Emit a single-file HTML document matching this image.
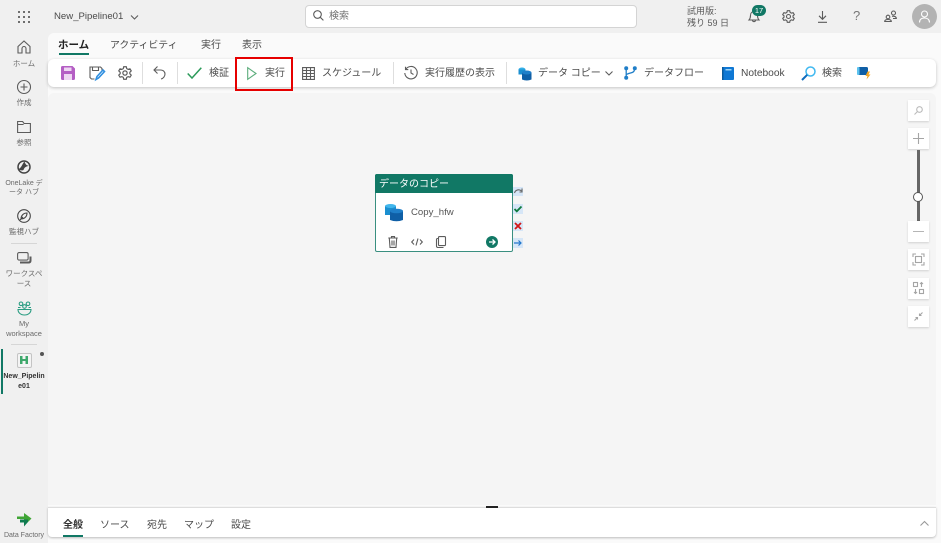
<!DOCTYPE html>
<html lang="ja"><head><meta charset="utf-8"><title>New_Pipeline01</title>
<style>
html,body{margin:0;padding:0}
body{width:941px;height:543px;overflow:hidden;position:relative;background:#f0f0f0;font-family:"Liberation Sans","Noto Sans CJK JP",sans-serif;color:#424242}
.a{position:absolute}
.t{position:absolute;white-space:nowrap;font-size:10px;line-height:14px;color:#4a4a4a}
.s{position:absolute;text-align:center;font-size:7.5px;line-height:10px;color:#6a6a6a;width:48px;left:0}
svg{position:absolute;overflow:visible;fill:none;stroke:#5c5c5c;stroke-width:1.1}
.sep{position:absolute;width:1px;top:62px;height:22px;background:#dedede}
.zb{position:absolute;left:908px;width:21px;height:21px;background:#fff;box-shadow:0 1px 2px rgba(0,0,0,.15)}
</style></head><body>

<!-- panels -->
<div class="a" style="left:48px;top:33px;width:893px;height:510px;background:#fafafa;border-radius:6px 0 0 0"></div>
<div class="a" style="left:48px;top:59px;width:888px;height:28px;background:#fff;border-radius:6px;box-shadow:0 1px 3px rgba(0,0,0,.22)"></div>
<div class="a" style="left:48px;top:93px;width:888px;height:412px;background:#f5f5f5;border-radius:6px 6px 0 0"></div>
<div class="a" style="left:48px;top:507px;width:888px;height:29px;background:#fff;border-top:1px solid #ddd;box-shadow:0 1px 2px rgba(0,0,0,.25);border-radius:0 0 4px 4px"></div>
<div class="a" style="left:486px;top:506px;width:12px;height:2px;background:#222"></div>

<!-- top bar -->
<svg style="left:18px;top:11px" width="12" height="12"><g fill="#444" stroke="none"><circle cx="1" cy="1" r="1"/><circle cx="6" cy="1" r="1"/><circle cx="11" cy="1" r="1"/><circle cx="1" cy="6" r="1"/><circle cx="6" cy="6" r="1"/><circle cx="11" cy="6" r="1"/><circle cx="1" cy="11" r="1"/><circle cx="6" cy="11" r="1"/><circle cx="11" cy="11" r="1"/></g></svg>
<div class="t" style="left:54px;top:10px;font-size:9.6px">New_Pipeline01</div>
<svg style="left:130px;top:15px" width="9" height="5"><path d="M1 .5l3.500 3.500L8 .5"/></svg>
<div class="a" style="left:305px;top:5px;width:330px;height:21px;background:#fff;border:1px solid #d4d4d4;border-radius:4px"></div>
<svg style="left:313px;top:10px" width="11" height="11"><circle cx="4.500" cy="4.500" r="3.800"/><path d="M7.300 7.300l3.100 3.100"/></svg>
<div class="t" style="left:329px;top:10px;color:#707070">検索</div>
<div class="t" style="left:687px;top:5px;font-size:9px;line-height:12px;color:#5a5a5a">試用版:<br>残り 59 日</div>
<svg style="left:748px;top:9px" width="12" height="14"><path d="M1 11h10c-1.300-1.500-1.500-2.500-1.500-4.500C9.500 4 8 2.500 6 2.500S2.500 4 2.500 6.500C2.500 8.500 2.300 9.500 1 11zM4.500 11.500c.3 1.500 2.700 1.500 3 0"/></svg>
<div class="a" style="left:752px;top:5px;width:14px;height:11px;background:#117865;border-radius:6px;color:#fff;font-size:7.500px;line-height:11px;text-align:center">17</div>
<svg style="left:782px;top:10px" width="13" height="13" viewBox="0 0 13 13"><path d="M5.300.7h2.400l.4 1.700 1.300.7 1.700-.5 1.200 2-1.300 1.200v1.400l1.300 1.200-1.200 2-1.700-.5-1.300.7-.4 1.700H5.300l-.4-1.700-1.300-.7-1.700.5-1.200-2 1.300-1.200V5.800L.7 4.600l1.200-2 1.700.5 1.300-.7z"/><circle cx="6.500" cy="6.500" r="2"/></svg>
<svg style="left:817px;top:11px" width="11" height="12"><path d="M5.500 0v8M2 4.800l3.500 3.500L9 4.800M1 11.300h9"/></svg>
<div class="t" style="left:853px;top:9px;font-size:13px;color:#777">?</div>
<svg style="left:884px;top:10px" width="13" height="12"><circle cx="4" cy="7" r="1.800"/><path d="M.7 11.500c0-1.500 1.300-2 3.300-2s3.300.5 3.300 2z"/><circle cx="9.500" cy="3" r="2"/><path d="M8 6.300c2-.3 4.300.2 4.300 2.200H9"/></svg>
<div class="a" style="left:912px;top:4px;width:25px;height:25px;background:#b3b3b3;border-radius:50%"></div>
<svg style="left:918px;top:10px;stroke:#fff" width="13" height="13"><circle cx="6.500" cy="4" r="3"/><path d="M1.500 12.500c0-3 2-4.500 5-4.500s5 1.500 5 4.500"/></svg>

<!-- ribbon tabs -->
<div class="t" style="left:58px;top:38px;font-weight:bold;color:#222;font-size:10.500px">ホーム</div>
<div class="a" style="left:59px;top:53px;width:30px;height:2px;background:#117865"></div>
<div class="t" style="left:110px;top:39px;font-size:9.900px">アクティビティ</div>
<div class="t" style="left:201px;top:39px">実行</div>
<div class="t" style="left:242px;top:39px">表示</div>

<!-- toolbar -->
<svg style="left:61px;top:66px;stroke:none" width="14" height="14"><path fill="#b45ec4" d="M0 1.500Q0 0 1.500 0h10L14 2.500v10q0 1.500-1.500 1.500h-11Q0 14 0 12.500z"/><rect x="3" y="1.500" width="7.500" height="3.500" fill="#eed6f2"/><rect x="3" y="8" width="8" height="6" fill="#eed6f2"/></svg>
<svg style="left:89px;top:66px" width="16" height="15"><path d="M5.500 13H2.500L1 11.500V1h10.500L13 2.500v2M3.500 1.500V4.500h6V1.500"/><path d="M7 13.500l1-3 6-6.500 1.500 1.500-6 6.500z" style="stroke:#2f8fe0;stroke-width:1.600"/></svg>
<svg style="left:118px;top:66px" width="14" height="14" viewBox="0 0 13 13"><path d="M5.300.7h2.400l.4 1.700 1.300.7 1.700-.5 1.200 2-1.300 1.200v1.400l1.300 1.200-1.200 2-1.700-.5-1.300.7-.4 1.700H5.300l-.4-1.700-1.300-.7-1.700.5-1.200-2 1.300-1.200V5.800L.7 4.600l1.200-2 1.700.5 1.300-.7z"/><circle cx="6.500" cy="6.500" r="2"/></svg>
<div class="sep" style="left:142px"></div>
<svg style="left:153px;top:66px" width="13" height="14"><path d="M4.500 .5L1 4l3.500 3.500M1 4h6.500c3 0 4.500 2 4.500 4s-1.500 4.500-4 5"/></svg>
<div class="sep" style="left:177px"></div>
<svg style="left:187px;top:67px;stroke:#2c9a5a;stroke-width:1.500" width="15" height="12"><path d="M.7 6.500L5 11 14.300.7"/></svg>
<div class="t" style="left:209px;top:67px">検証</div>
<div class="a" style="left:235px;top:57px;width:54px;height:30px;border:2px solid #e60000"></div>
<svg style="left:247px;top:67px;stroke:#5cad7c" width="10" height="13"><path d="M.7.700L9 6.500.7 12.300z"/></svg>
<div class="t" style="left:265px;top:67px">実行</div>
<svg style="left:302px;top:66px" width="13" height="14"><path d="M.6 1.600h11.800v11.800H.6zM.6 4.500h11.800M.6 7.500h11.800M.6 10.500h11.800M4.500 1.600v11.800M8.500 1.600v11.800"/></svg>
<div class="t" style="left:322px;top:67px">スケジュール</div>
<div class="sep" style="left:393px"></div>
<svg style="left:404px;top:66px" width="14" height="14"><path d="M1.800 3.300A6.200 6.200 0 1 1 .8 7M1.500.8v2.800h2.800M7 3.500V7l2.500 1.500"/></svg>
<div class="t" style="left:425px;top:67px">実行履歴の表示</div>
<div class="sep" style="left:506px"></div>
<svg style="left:518px;top:67px;stroke:none" width="14" height="14"><ellipse cx="4" cy="2.500" rx="3.500" ry="2" fill="#34b0e8"/><path d="M.5 2.500h7v5h-7z" fill="#1b8fd0"/><path d="M4 5.500h9.500v7q-4.700 2-9.500 0z" fill="#0f5fa6"/><ellipse cx="8.700" cy="5.500" rx="4.800" ry="2" fill="#1f7fc9"/></svg>
<div class="t" style="left:538px;top:67px">データ コピー</div>
<svg style="left:605px;top:71px" width="8" height="5"><path d="M.5.500L4 4 7.500.5"/></svg>
<svg style="left:624px;top:66px;stroke:#1f7ec8;stroke-width:1.300" width="13" height="14"><path d="M2.200 3v8M10.500 3c0 3-2 3.500-4 4s-4 1-4.300 2"/><g fill="#1f7ec8" stroke="none"><circle cx="2.200" cy="2.200" r="2"/><circle cx="10.800" cy="2.200" r="2"/><circle cx="2.200" cy="11.800" r="2"/></g></svg>
<div class="t" style="left:644px;top:67px">データフロー</div>
<svg style="left:722px;top:67px;stroke:none" width="12" height="13"><rect width="12" height="13" rx="1" fill="#0f78d4"/><rect x="0" width="1.500" height="13" fill="#0a5a9c"/><rect x="3.500" y="2" width="6" height="1.500" fill="#9ed4f5"/></svg>
<div class="t" style="left:741px;top:67px;font-size:10.200px">Notebook</div>
<svg style="left:801px;top:66px" width="15" height="15"><circle cx="9.500" cy="5.500" r="4.500" style="stroke:#3fb8f0;stroke-width:1.500"/><path d="M6.200 8.800L1 14" style="stroke:#0f6cbd;stroke-width:2"/></svg>
<div class="t" style="left:822px;top:67px">検索</div>
<svg style="left:857px;top:66px;stroke:none" width="15" height="14"><rect x="1" y="1" width="10" height="8" rx="1.500" fill="#0f5fa6"/><rect y="1" width="2.500" height="8" rx="1" fill="#5cc3ef"/><path d="M10.500 5.500l-2 4.500h2l-1 3.500 4-5h-2l1.500-3z" fill="#f5a623"/></svg>

<!-- left rail -->
<svg style="left:17px;top:40px" width="14" height="14"><path d="M1 6.500L7 1l6 5.500V13H9V8.500a2 2 0 0 0-4 0V13H1z"/></svg>
<div class="s" style="top:59px">ホーム</div>
<svg style="left:17px;top:80px" width="14" height="14"><circle cx="7" cy="7" r="6.500"/><path d="M7 3.500v7M3.500 7h7"/></svg>
<div class="s" style="top:98px">作成</div>
<svg style="left:17px;top:120px" width="14" height="14"><path d="M.6 12.500V1.500h5l1.500 2h6.300v9zM.6 4.500h6"/></svg>
<div class="s" style="top:138px">参照</div>
<svg style="left:17px;top:160px" width="14" height="14"><circle cx="7" cy="7" r="6" style="stroke:#444;stroke-width:1.500"/><path d="M1.500 9c3-1 3.500-5 6-7.500 1 3 2 4 5 4.500-2 0-5 .5-6 4-2 1-4 0-5-1z" fill="#444" stroke="none"/></svg>
<div class="s" style="top:179px;font-size:7px;line-height:9px">OneLake デ<br>ータ ハブ</div>
<svg style="left:17px;top:209px" width="14" height="14"><circle cx="7" cy="7" r="6.300" style="stroke:#444"/><path d="M4 10c0-3 2-6 6-6 0 4-3 6-6 6zM3 11l3-3" style="stroke:#444"/></svg>
<div class="s" style="top:227px">監視ハブ</div>
<div class="a" style="left:11px;top:243px;width:26px;height:1px;background:#d6d6d6"></div>
<svg style="left:17px;top:252px" width="15" height="13"><rect x=".6" y=".6" width="10.500" height="7.500" rx="1.500"/><path d="M3 10.500h8.500q2 0 2-2V4.500" style="stroke-width:2"/></svg>
<div class="s" style="top:269px">ワークスペ<br>ース</div>
<svg style="left:17px;top:301px;stroke:#2a9d82" width="15" height="15"><circle cx="4" cy="2.800" r="1.800"/><circle cx="11" cy="2.800" r="1.800"/><circle cx="7.500" cy="5.500" r="1.800"/><path d="M1 6.500h2.500M11.500 6.500H14M1 8.500c0 3 2.500 5.500 6.500 5.500s6.500-2.500 6.500-5.500H1z"/></svg>
<div class="s" style="top:319px">My<br>workspace</div>
<div class="a" style="left:11px;top:344px;width:26px;height:1px;background:#d6d6d6"></div>
<div class="a" style="left:1px;top:349px;width:2px;height:45px;background:#117865"></div>
<div class="a" style="left:17px;top:353px;width:13px;height:13px;background:#f4f4f4;border:1px solid #c4c4c4;border-radius:2px"></div>
<svg style="left:20px;top:356px;stroke:none" width="9" height="9"><path d="M0 0h2.500v3h3V0H8v8H5.500V5h-3v3H0z" fill="#3ea86b"/></svg>
<div class="a" style="left:40px;top:352px;width:4px;height:4px;background:#555;border-radius:50%"></div>
<div class="s" style="top:372px;color:#333;font-weight:bold;font-size:7px">New_Pipelin<br>e01</div>
<svg style="left:17px;top:513px;stroke:none" width="15" height="14"><path d="M7 0l7.500 5.500L11 9H7V6H0V3.500h7z" fill="#3fa535"/><path d="M3 6.500h8v2.500L7 13.500V9.500H3z" fill="#0f7b4f"/></svg>
<div class="s" style="top:531px;font-size:7px">Data Factory</div>

<!-- activity node -->
<div class="a" style="left:375px;top:174px;width:136px;height:76px;background:#fff;border:1px solid #3a8f80;border-radius:2px"></div>
<div class="a" style="left:375px;top:174px;width:138px;height:19px;background:#117865;border-radius:2px 2px 0 0;color:#fff;font-size:10px;line-height:22px;text-indent:4px">データのコピー</div>
<svg style="left:385px;top:204px;stroke:none" width="18" height="18"><path d="M0 2h11v9H0z" fill="#1b8fd0"/><ellipse cx="5.500" cy="2" rx="5.500" ry="2" fill="#42b6ec"/><path d="M5 7h13v9q-6.500 2.500-13 0z" fill="#0f5fa6"/><ellipse cx="11.500" cy="7" rx="6.500" ry="2.300" fill="#1f7fc9"/></svg>
<div class="t" style="left:411px;top:206px;font-size:9.600px;color:#555">Copy_hfw</div>
<svg style="left:388px;top:236px" width="10" height="12"><path d="M.3 2h9.400M3.500 2V.6h3V2M1.300 2l.7 9.400h6L8.700 2M4 4.500v5M6 4.500v5"/></svg>
<svg style="left:411px;top:238px" width="12" height="8"><path d="M3 1.500L.7 4 3 6.500M9 1.500L11.300 4 9 6.500M7 .5L5 7.500"/></svg>
<svg style="left:436px;top:236px" width="10" height="12"><rect x="2.500" y=".6" width="7" height="9" rx="1"/><path d="M2 2.500H1.500a1 1 0 0 0-1 1v6.500a1.500 1.500 0 0 0 1.500 1.500h5.500"/></svg>
<div class="a" style="left:486px;top:236px;width:12px;height:12px;background:#117865;border-radius:50%"></div>
<svg style="left:489px;top:239px;stroke:#fff;stroke-width:1.300" width="7" height="6"><path d="M0 3h6M3.500.5L6 3 3.500 5.500"/></svg>
<div class="a" style="left:513px;top:187px;width:10px;height:9px;background:#d6e6f7"></div>
<svg style="left:514px;top:188px;stroke:#666" width="9" height="6"><path d="M.5 5c1-3.500 5-4 7-2M8 .5v3.500H5.500"/></svg>
<div class="a" style="left:513px;top:204px;width:10px;height:10px;background:#d6e6f7"></div>
<svg style="left:514px;top:206px;stroke:#0f7b3f;stroke-width:1.800" width="8" height="6"><path d="M.5 3l2.300 2.300L7.500.5"/></svg>
<div class="a" style="left:513px;top:221px;width:10px;height:10px;background:#d6e6f7"></div>
<svg style="left:515px;top:223px;stroke:#d01818;stroke-width:1.800" width="6" height="6"><path d="M0 0l6 6M6 0L0 6"/></svg>
<div class="a" style="left:513px;top:238px;width:10px;height:10px;background:#d6e6f7"></div>
<svg style="left:514px;top:240px;stroke:#2277cc;stroke-width:1.200" width="8" height="6"><path d="M0 3h7M4.500.5L7 3 4.500 5.500"/></svg>

<!-- zoom controls -->
<div class="zb" style="top:100px"></div>
<svg style="left:914px;top:106px;stroke:#bbb" width="9" height="9"><circle cx="5.500" cy="3.500" r="2.800"/><path d="M3.500 5.500L.5 8.500"/></svg>
<div class="zb" style="top:128px"></div>
<svg style="left:913px;top:133px;stroke:#a5a5a5" width="11" height="11"><path d="M5.500 0v11M0 5.500h11"/></svg>
<div class="a" style="left:917px;top:150px;width:3px;height:71px;background:#666"></div>
<div class="a" style="left:913px;top:192px;width:8px;height:8px;background:#fff;border:1.500px solid #555;border-radius:50%"></div>
<div class="zb" style="top:221px"></div>
<div class="a" style="left:913px;top:231px;width:11px;height:1px;background:#b5b5b5"></div>
<div class="zb" style="top:249px"></div>
<svg style="left:913px;top:254px;stroke:#a5a5a5" width="11" height="11"><path d="M0 3V0h3M8 0h3v3M11 8v3H8M3 11H0V8"/><rect x="2.500" y="2.500" width="6" height="6"/></svg>
<div class="zb" style="top:278px"></div>
<svg style="left:913px;top:282px;stroke:#a5a5a5" width="11" height="12"><rect x=".5" y=".5" width="4" height="4"/><rect x="6.500" y="7.500" width="4" height="4"/><path d="M8.500 5V.5M7 2l1.500-1.500L10 2M2.500 7v4.500M1 10l1.500 1.500L4 10"/></svg>
<div class="zb" style="top:306px"></div>
<svg style="left:914px;top:312px;stroke:#a5a5a5" width="9" height="9"><path d="M.5 8.500l3-3M1.500 5.500h2v2M8.500.5l-3 3M7.500 3.500h-2v-2"/></svg>

<!-- bottom tabs -->
<div class="t" style="left:63px;top:519px;color:#333;font-weight:bold">全般</div>
<div class="a" style="left:63px;top:535px;width:20px;height:2px;background:#117865"></div>
<div class="t" style="left:100px;top:519px">ソース</div>
<div class="t" style="left:147px;top:519px">宛先</div>
<div class="t" style="left:184px;top:519px">マップ</div>
<div class="t" style="left:231px;top:519px">設定</div>
<svg style="left:920px;top:521px;stroke:#999" width="9" height="5"><path d="M.5 4.500L4.500.5l4 4"/></svg>
</body></html>
